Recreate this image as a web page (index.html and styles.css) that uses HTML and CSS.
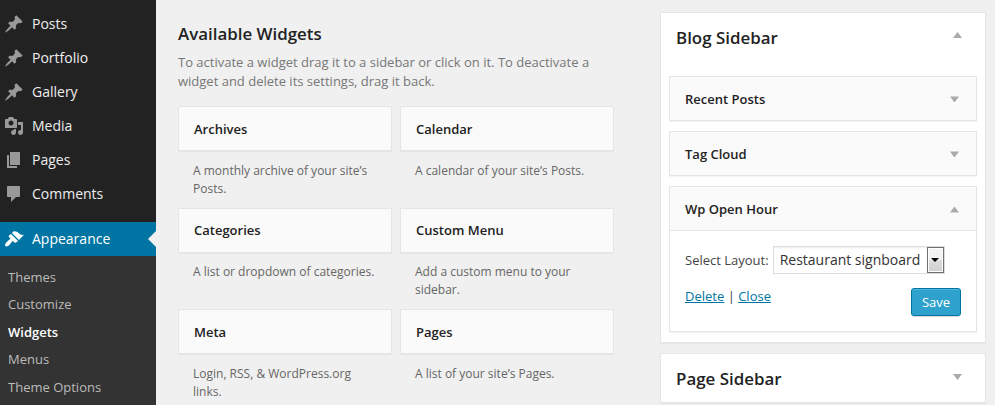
FILE: index.html
```html
<!DOCTYPE html>
<html lang="en">
<head>
<meta charset="utf-8">
<title>Widgets</title>
<link rel="stylesheet" href="styles.css">
</head>
<body>
<svg class="sprite" width="0" height="0">
  <symbol id="pin" viewBox="0 0 20 20"><path d="M10.44 3.02l1.82-1.82 6.36 6.35-1.83 1.82c-1.05-.68-2.48-.57-3.41.36l-.75.75c-.92.93-1.04 2.35-.35 3.41l-1.83 1.82-2.41-2.41-2.8 2.79c-.42.42-3.38 2.71-3.8 2.29s1.86-3.39 2.28-3.81l2.79-2.79L4.1 9.36l1.83-1.82c1.05.69 2.48.57 3.4-.36l.75-.75c.93-.92 1.05-2.35.36-3.41z"/></symbol>
</svg>
<div class="admin">
  <nav class="menu">
    <a class="item"><svg class="icon"><use href="#pin"/></svg><span>Posts</span></a>
    <a class="item"><svg class="icon"><use href="#pin"/></svg><span>Portfolio</span></a>
    <a class="item"><svg class="icon"><use href="#pin"/></svg><span>Gallery</span></a>
    <a class="item"><svg class="icon" viewBox="0 0 20 20"><path d="M13 11V4c0-.55-.45-1-1-1h-1.67L9 1H5L3.67 3H2c-.55 0-1 .45-1 1v7c0 .55.45 1 1 1h10c.55 0 1-.45 1-1zM7 4.5c1.38 0 2.5 1.12 2.5 2.5S8.38 9.5 7 9.5 4.5 8.38 4.5 7 5.62 4.5 7 4.5zM14 6h5v10.5c0 1.38-1.12 2.5-2.5 2.5S14 17.88 14 16.5s1.12-2.5 2.5-2.5c.17 0 .34.02.5.05V9h-3V6zm-4 8.05V13h2v3.5c0 1.38-1.12 2.5-2.5 2.5S7 17.88 7 16.5 8.12 14 9.5 14c.17 0 .34.02.5.05z"/></svg><span>Media</span></a>
    <a class="item"><svg class="icon" viewBox="0 0 20 20"><path d="M6 15V2h10v13H6zm-1 1h8v2H3V5h2v11z"/></svg><span>Pages</span></a>
    <a class="item"><svg class="icon" viewBox="0 0 20 20"><path d="M4 2h11c.6 0 1 .4 1 1v9c0 .6-.4 1-1 1h-3l-5 5v-5H4c-.6 0-1-.4-1-1V3c0-.6.4-1 1-1z"/></svg><span>Comments</span></a>
    <a class="item current"><svg class="icon" viewBox="0 0 20 20"><path d="M14.98 11.06L7.91 3.99l1.5-1.5c.5-.56 2.3-.47 3.51.32 1.21.8 1.43 1.28 2.91 2.1 1.18.64 2.45 1.26 4.17.85zm-.9.9L7 4.9 4.93 6.47c-.39.39-.39 1.02 0 1.41l1.06 1.06c.39.39.39 1.03 0 1.42-.6.6-1.43 1.11-2.21 1.69-.35.26-.7.53-1.01.84C1.43 14.23.4 16.08 1.4 17.07c.99 1 2.84-.03 4.18-1.36.31-.31.58-.66.85-1.02.57-.78 1.08-1.61 1.69-2.21.39-.39 1.02-.39 1.41 0l1.06 1.06c.39.39 1.02.39 1.41 0z"/></svg><span>Appearance</span></a>
    <div class="submenu">
      <a>Themes</a>
      <a>Customize</a>
      <a class="active">Widgets</a>
      <a>Menus</a>
      <a>Theme Options</a>
    </div>
  </nav>

  <main class="available">
    <h2>Available Widgets</h2>
    <p class="intro">To activate a widget drag it to a sidebar or click on it. To deactivate a widget and delete its settings, drag it back.</p>
    <div class="grid">
      <div><h4 class="card">Archives</h4><p class="desc">A monthly archive of your site’s Posts.</p></div>
      <div><h4 class="card">Calendar</h4><p class="desc">A calendar of your site’s Posts.</p></div>
      <div><h4 class="card">Categories</h4><p class="desc">A list or dropdown of categories.</p></div>
      <div><h4 class="card">Custom Menu</h4><p class="desc">Add a custom menu to your sidebar.</p></div>
      <div><h4 class="card">Meta</h4><p class="desc">Login, RSS, &amp; WordPress.org links.</p></div>
      <div><h4 class="card">Pages</h4><p class="desc">A list of your site’s Pages.</p></div>
    </div>
  </main>

  <aside class="areas">
    <section class="area open">
      <header class="area-head"><h3>Blog Sidebar</h3><i class="arrow up"></i></header>
      <h4 class="card">Recent Posts<i class="arrow"></i></h4>
      <h4 class="card">Tag Cloud<i class="arrow"></i></h4>
      <div class="widget">
        <h4 class="card">Wp Open Hour<i class="arrow up"></i></h4>
        <div class="form">
          <div class="field">
            <span>Select Layout:</span>
            <div class="select"><span>Restaurant signboard</span><b class="drop"></b></div>
          </div>
          <div class="actions">
            <p><a>Delete</a> | <a>Close</a></p>
            <button>Save</button>
          </div>
        </div>
      </div>
    </section>
    <section class="area">
      <header class="area-head"><h3>Page Sidebar</h3><i class="arrow"></i></header>
    </section>
  </aside>
</div>
</body>
</html>
```
FILE: styles.css
```css
* { box-sizing: border-box; }
body {
  margin: 0;
  height: 405px;
  overflow: hidden;
  background: #f0f0f0;
  color: #444;
  font: 13px/19px "Open Sans", sans-serif;
}
h2, h3, h4, p { margin: 0; }
.sprite { position: absolute; }
.admin { display: flex; height: 405px; }

.menu { width: 156px; height: 405px; padding-top: 7px; background: #222; flex: none; overflow: hidden; }
.item {
  display: flex;
  align-items: center;
  height: 34px;
  padding-left: 4px;
  gap: 8px;
  color: #eee;
  font-size: 14px;
}
.item span { padding-bottom: 2px; }
.icon { width: 20px; height: 20px; fill: #999; flex: none; }
.item.current { position: relative; margin-top: 11px; background: #0074a2; color: #fff; }
.item.current .icon { fill: #fff; }
.item.current::after {
  content: "";
  position: absolute;
  right: 0;
  top: 9px;
  border: 8px solid transparent;
  border-right-color: #f0f0f0;
  border-left: 0;
}
.submenu { height: 160px; padding: 7.8px 8px 0; background: #333; }
.submenu a { display: block; height: 27.5px; line-height: 27.5px; color: #bbb; }
.submenu .active { color: #fff; font-weight: 600; }

.available { width: 436px; margin-left: 22px; padding-top: 22px; flex: none; }
.available h2 { font-size: 16.9px; line-height: 24px; font-weight: 600; color: #222; }
.intro { margin-top: 7px; color: #777; }
.grid {
  display: grid;
  grid-template-columns: 214px 214px;
  grid-auto-rows: 101.6px;
  column-gap: 8px;
  margin-top: 15px;
}
.card {
  display: flex;
  align-items: center;
  justify-content: space-between;
  height: 45px;
  padding: 1.8px 15px 0;
  border: 1px solid #e5e5e5;
  background: #fafafa;
  box-shadow: 0 1px 1px rgba(0, 0, 0, .04);
  color: #222;
  font-size: 13px;
  font-weight: 600;
}
.desc { padding: 10.8px 15px 0; font-size: 12px; line-height: 18px; color: #666; }

.areas { width: 326px; margin-left: 46px; padding-top: 12px; flex: none; }
.area {
  height: 50px;
  padding: 0 8px;
  border: 1px solid #e5e5e5;
  background: #fff;
  box-shadow: 0 1px 1px rgba(0, 0, 0, .04);
}
.area + .area { margin-top: 10px; }
.area.open { height: 331px; }
.area-head {
  display: flex;
  justify-content: space-between;
  height: 50px;
  padding: 12px 15px 0 7px;
}
.open .area-head { height: 63px; }
.area-head h3 { font-size: 16.9px; line-height: 26px; font-weight: 600; color: #222; }
.area > .card { margin-bottom: 10px; }
.arrow {
  width: 9px;
  height: 6px;
  margin-right: 2px;
  background: #aaa;
  clip-path: polygon(0 0, 100% 0, 50% 100%);
}
.arrow.up { clip-path: polygon(0 100%, 100% 100%, 50% 0); }
.area-head .arrow { margin: 8px 0 0; }
.area-head .arrow.up { margin-top: 7px; }

.widget { height: 146px; border: 1px solid #e5e5e5; box-shadow: 0 1px 1px rgba(0, 0, 0, .04); }
.widget .card { border-width: 0 0 1px; height: 44px; padding-top: 2px; box-shadow: none; }
.form { padding: 15px; }
.field { display: flex; align-items: center; height: 28px; gap: 4px; }
.select {
  display: flex;
  width: 172px;
  height: 28px;
  padding: 1px 0 1px 6px;
  border: 1px solid #ddd;
  box-shadow: inset 0 1px 2px rgba(0, 0, 0, .07);
  font-size: 14px;
  line-height: 24px;
  color: #333;
  justify-content: space-between;
  white-space: nowrap;
}
.drop {
  display: grid;
  place-items: center;
  width: 17px;
  margin: -1px 0;
  border: 1px solid #707070;
  box-shadow: inset 0 0 0 1px #fff;
  background: linear-gradient(#f2f2f2 0 50%, #ddd 50%, #cfcfcf);
}
.drop::after { content: ""; border: 4px solid transparent; border-top-color: #000; border-bottom: 0; }
.actions { display: flex; justify-content: space-between; margin-top: 14px; }
.actions p { line-height: 17px; }
.actions a { color: #0074a2; text-decoration: underline; }
button {
  width: 50px;
  height: 28px;
  padding: 0;
  border: 1px solid #0074a2;
  border-radius: 3px;
  background: #2ea2cc;
  box-shadow: inset 0 1px 0 rgba(120, 200, 230, .5), 0 1px 0 rgba(0, 0, 0, .15);
  color: #fff;
  font: 13px/26px "Open Sans", sans-serif;
}
```
